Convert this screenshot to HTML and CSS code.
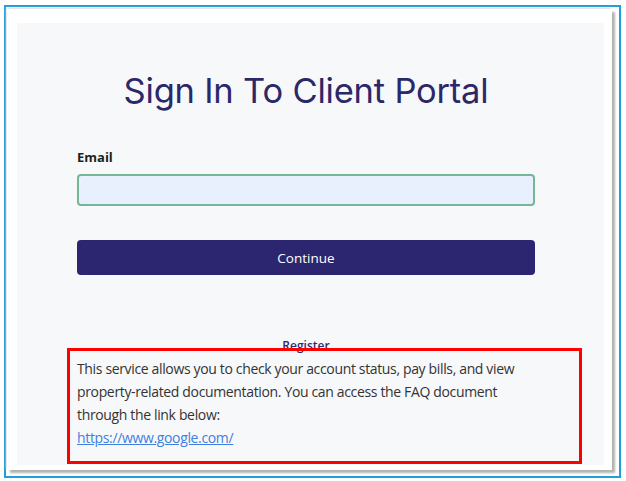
FILE: index.html
```html
<!DOCTYPE html>
<html lang="en">
<head>
    <meta charset="UTF-8">
    <meta name="viewport" content="width=device-width, initial-scale=1.0">
    <title>Client Portal Sign In</title>
    <link rel="stylesheet" href="styles.css">
</head>
<body>
    <div class="frame">
        <div class="sheet">
            <div class="panel">
                <h1 class="title">Sign In To Client Portal</h1>
                <form class="login-form" onsubmit="return false">
                    <label class="field-label" for="email">Email</label>
                    <input class="field-input" type="email" id="email">
                    <button class="continue-button" type="submit">Continue</button>
                </form>
                <div class="register-link">Register</div>
                <div class="info">
                    <p>This service allows you to check your account status, pay bills, and view property-related documentation. You can access the FAQ document through the link below:</p>
                    <a href="https://www.google.com/">https://www.google.com/</a>
                    <div class="highlight"></div>
                </div>
            </div>
        </div>
    </div>
</body>
</html>
```

FILE: styles.css
```css
body { margin: 0; background-color: white; font-family: "Open Sans", sans-serif; }
.frame { margin: 5px 0 0 4px; width: 617px; height: 473px; box-sizing: border-box; border: 2px solid #1fa0db; padding: 2px 7px 6px 1px; }
.sheet { height: 100%; box-sizing: border-box; background-color: white; box-shadow: 3px 3px 2px #b3b3b3, -1px -1px 2px #dcdcdc; padding: 14px 8px 5px 10px; }
.panel { height: 100%; box-sizing: border-box; background-color: #f7f8fa; padding: 0 69px 0 60px; }
.title { margin: 0; padding-top: 47px; text-align: center; font-family: Inter, sans-serif; font-weight: 400; font-size: 34.5px; color: #2b2868; letter-spacing: -0.2px; }
.login-form { display: flex; flex-direction: column; margin-top: 37px; }
.field-label { font-size: 13px; font-weight: 700; color: #1f1f1f; margin-bottom: 8px; }
.field-input { height: 32px; box-sizing: border-box; border: 2px solid #74b696; border-radius: 4px; background-color: #e8f0fe; }
.continue-button { margin-top: 34px; height: 35px; border: none; border-radius: 4px; background-color: #2c2670; color: white; font-family: "Open Sans", sans-serif; font-size: 13.5px; cursor: pointer; }
.register-link { margin-top: 62px; text-align: center; font-size: 12px; font-weight: 600; color: #2d2a6e; }
.info { position: relative; margin-top: 3px; font-size: 14px; line-height: 23px; color: #333; letter-spacing: -0.35px; }
.info p { margin: 0; }
.info a { color: #3f7fe0; }
.highlight { position: absolute; top: -9px; left: -10px; right: -47px; bottom: -15px; border: 3px solid red; }
```
